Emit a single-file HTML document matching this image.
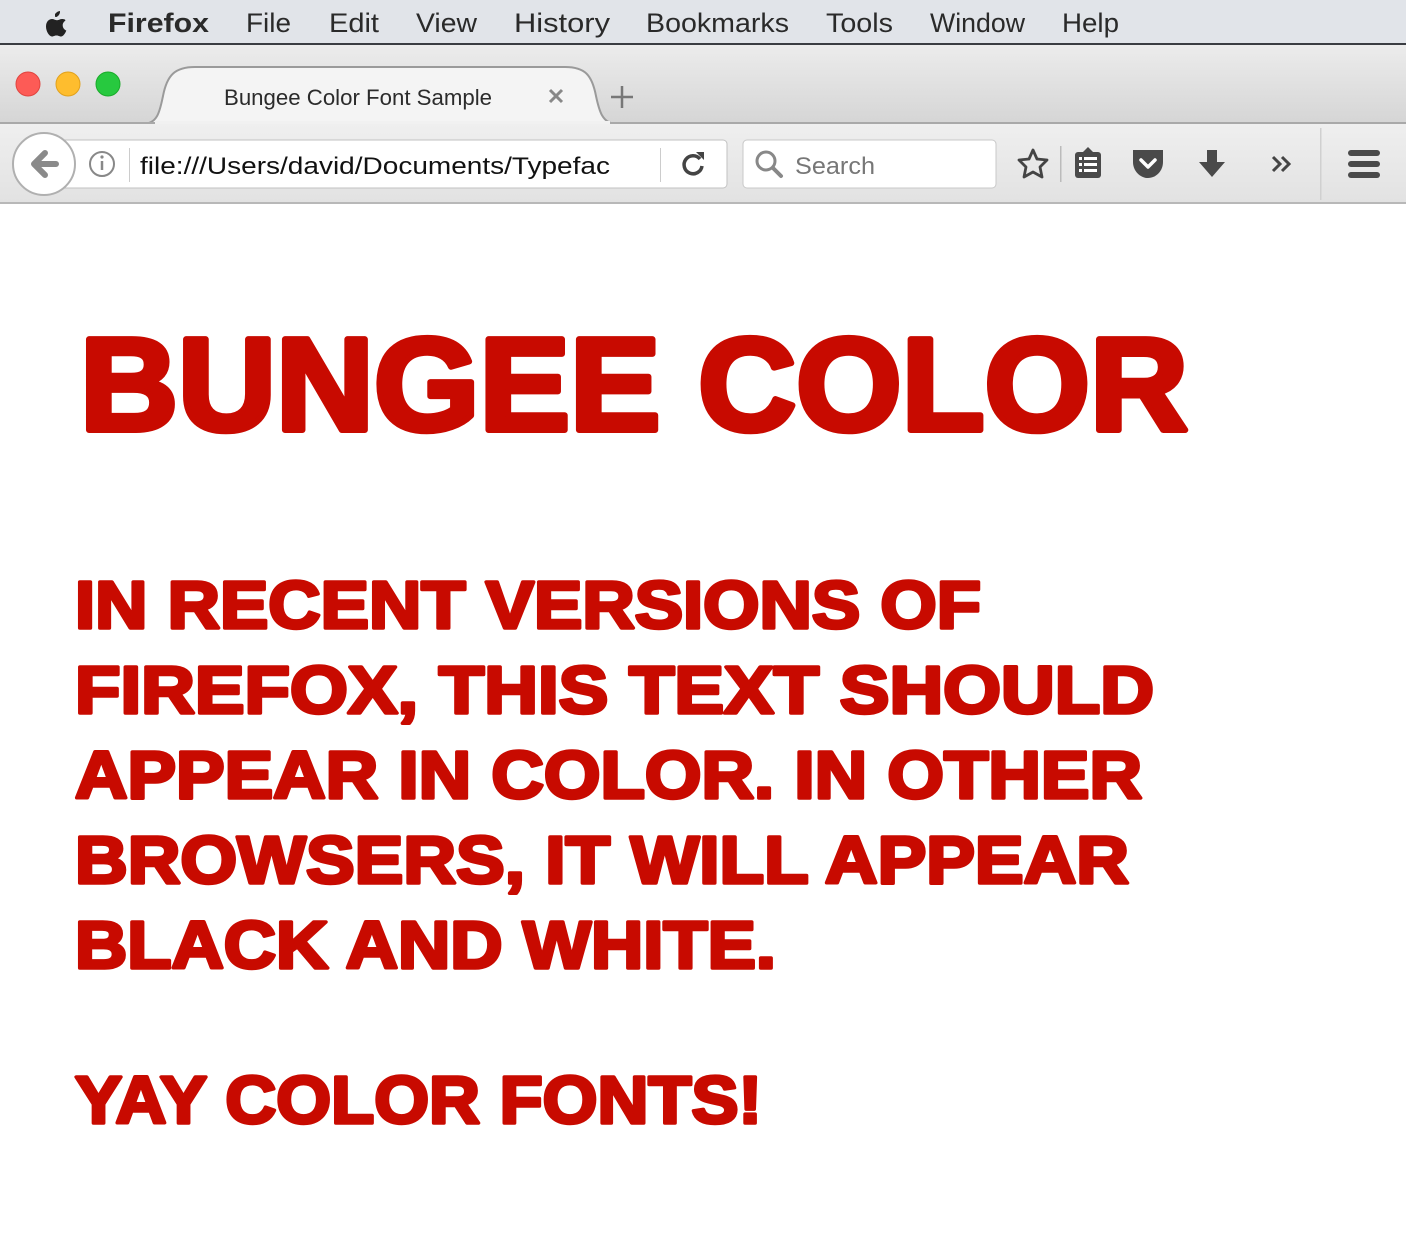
<!DOCTYPE html>
<html><head><meta charset="utf-8"><style>
html,body{margin:0;padding:0;background:#fff;}
svg{display:block}
text{font-family:"Liberation Sans",sans-serif;}
</style></head><body>
<svg width="1406" height="1260" viewBox="0 0 1406 1260" xmlns="http://www.w3.org/2000/svg">
<defs>
<linearGradient id="tb" x1="0" y1="0" x2="0" y2="1"><stop offset="0" stop-color="#ececec"/><stop offset="1" stop-color="#d5d5d5"/></linearGradient>
<linearGradient id="nb" x1="0" y1="0" x2="0" y2="1"><stop offset="0" stop-color="#efefef"/><stop offset="1" stop-color="#e2e2e2"/></linearGradient>
</defs>
<rect x="0" y="0" width="1406" height="44" fill="#e1e4e9"/>
<rect x="0" y="43" width="1406" height="2" fill="#3a3d42"/>
<path d="M55 14c1.5-2 3.5-3 5-3 .2 2-.6 3.8-2 5-1.3 1.1-3 1.6-3 0zM62 19c-2 0-3 1.2-5 1.2s-3-1.2-5-1.2c-3 0-6 2.6-6 7.5 0 5 3.3 10 6 10 1.6 0 2.3-1 4.5-1s2.8 1 4.5 1c2.4 0 4.4-3.6 5.3-6-2.6-1.1-3.6-3.3-3.6-5.3 0-2 1.2-3.6 2.6-4.5C65.7 19.5 64 19 62 19z" fill="#222"/>
<g font-size="27" fill="#2a2a2a">
<text x="108" y="32" font-weight="bold" textLength="101" lengthAdjust="spacingAndGlyphs">Firefox</text>
<text x="246" y="32" textLength="45" lengthAdjust="spacingAndGlyphs">File</text>
<text x="329" y="32" textLength="50" lengthAdjust="spacingAndGlyphs">Edit</text>
<text x="416" y="32" textLength="61" lengthAdjust="spacingAndGlyphs">View</text>
<text x="514" y="32" textLength="96" lengthAdjust="spacingAndGlyphs">History</text>
<text x="646" y="32" textLength="143" lengthAdjust="spacingAndGlyphs">Bookmarks</text>
<text x="826" y="32" textLength="67" lengthAdjust="spacingAndGlyphs">Tools</text>
<text x="930" y="32" textLength="95" lengthAdjust="spacingAndGlyphs">Window</text>
<text x="1062" y="32" textLength="57" lengthAdjust="spacingAndGlyphs">Help</text>
</g>
<rect x="0" y="45" width="1406" height="79" fill="url(#tb)"/>
<circle cx="28" cy="84" r="12" fill="#fd5b56" stroke="#e0443f" stroke-width="1"/>
<circle cx="68" cy="84" r="12" fill="#febd2e" stroke="#e1a11c" stroke-width="1"/>
<circle cx="108" cy="84" r="12" fill="#27c93f" stroke="#1aab2a" stroke-width="1"/>
<path d="M143 124 C158 124 160 110 163 96 C167 75 175 67 195 67 L565 67 C585 67 592 75 596 96 C599 110 602 124 617 124 Z" fill="#f4f4f4" stroke="#9a9a9a" stroke-width="2"/>
<rect x="0" y="122" width="1406" height="2" fill="#a9a9a9"/>
<rect x="155" y="121" width="455" height="4" fill="#f1f1f1"/>
<text x="224" y="105" font-size="22" fill="#2b2b2b" textLength="268" lengthAdjust="spacingAndGlyphs">Bungee Color Font Sample</text>
<path d="M550 90l12 12M562 90l-12 12" stroke="#888" stroke-width="3"/>
<path d="M622 86v22M611 97h22" stroke="#777" stroke-width="2.5"/>
<rect x="0" y="124" width="1406" height="79" fill="url(#nb)"/>
<rect x="0" y="202" width="1406" height="2" fill="#b8b8b8"/>
<rect x="52" y="140" width="675" height="48" rx="4" fill="#fff" stroke="#c2c2c2"/>
<circle cx="44" cy="164" r="31" fill="#fff" stroke="#b0b0b0" stroke-width="2"/>
<path d="M56 164H36M45 153l-11 11 11 11" stroke="#8a8a8a" stroke-width="6" fill="none" stroke-linecap="round" stroke-linejoin="round"/>
<circle cx="102" cy="164" r="12" fill="none" stroke="#888" stroke-width="2"/>
<path d="M102 161v9" stroke="#888" stroke-width="2.5"/><circle cx="102" cy="157" r="1.6" fill="#888"/>
<rect x="129" y="148" width="1" height="34" fill="#ccc"/>
<text x="140" y="174" font-size="24" fill="#111" textLength="470" lengthAdjust="spacingAndGlyphs">file:///Users/david/Documents/Typefac</text>
<rect x="660" y="148" width="1" height="34" fill="#ccc"/>
<path d="M700 159a9 9 0 1 0 2 7" fill="none" stroke="#444" stroke-width="3.5"/>
<path d="M696 152l8 0 0 8z" fill="#444"/>
<rect x="743" y="140" width="253" height="48" rx="4" fill="#fff" stroke="#c8c8c8"/>
<circle cx="766" cy="161" r="9" fill="none" stroke="#888" stroke-width="3"/>
<path d="M773 168l8 8" stroke="#888" stroke-width="4" stroke-linecap="round"/>
<text x="795" y="174" font-size="24" fill="#777" textLength="80" lengthAdjust="spacingAndGlyphs">Search</text>
<path d="M1033 150l4 9 10 1-7 7 2 10-9-5-9 5 2-10-7-7 10-1z" fill="none" stroke="#444" stroke-width="2.8" stroke-linejoin="round"/>
<rect x="1060" y="146" width="1.5" height="36" fill="#bbb"/>
<rect x="1075" y="152" width="26" height="26" rx="3" fill="#4a4a4a"/>
<path d="M1083 152l5-5 5 5z" fill="#4a4a4a"/>
<g fill="#fff"><rect x="1079" y="157" width="3" height="3"/><rect x="1079" y="163" width="3" height="3"/><rect x="1079" y="169" width="3" height="3"/><rect x="1084" y="157" width="13" height="3"/><rect x="1084" y="163" width="13" height="3"/><rect x="1084" y="169" width="13" height="3"/></g>
<path d="M1133 150h30v12c0 9-7 16-15 16s-15-7-15-16z" fill="#4a4a4a"/>
<path d="M1141 160l7 7 7-7" stroke="#fff" stroke-width="3.5" fill="none" stroke-linecap="round" stroke-linejoin="round"/>
<path d="M1207 150h10v12h8l-13 15-13-15h8z" fill="#4a4a4a"/>
<path d="M1273 157l7 7-7 7M1282 157l7 7-7 7" stroke="#444" stroke-width="3" fill="none"/>
<rect x="1320" y="128" width="1.5" height="72" fill="#d0d0d0"/>
<g fill="#4a4a4a"><rect x="1348" y="150" width="32" height="6" rx="3"/><rect x="1348" y="161" width="32" height="6" rx="3"/><rect x="1348" y="172" width="32" height="6" rx="3"/></g>
<g fill="#c80a00" font-weight="bold" stroke="#c80a00" stroke-linejoin="round">
<text x="80" y="430" font-size="132" stroke-width="6" textLength="1108" lengthAdjust="spacingAndGlyphs">BUNGEE COLOR</text>
<g font-size="67" stroke-width="3.5">
<text x="75" y="628" textLength="906" lengthAdjust="spacingAndGlyphs">IN RECENT VERSIONS OF</text>
<text x="75" y="713" textLength="1079" lengthAdjust="spacingAndGlyphs">FIREFOX, THIS TEXT SHOULD</text>
<text x="75" y="798" textLength="1067" lengthAdjust="spacingAndGlyphs">APPEAR IN COLOR. IN OTHER</text>
<text x="75" y="883" textLength="1054" lengthAdjust="spacingAndGlyphs">BROWSERS, IT WILL APPEAR</text>
<text x="75" y="968" textLength="701" lengthAdjust="spacingAndGlyphs">BLACK AND WHITE.</text>
<text x="75" y="1123" textLength="687" lengthAdjust="spacingAndGlyphs">YAY COLOR FONTS!</text>
</g>
</g>
</svg>
</body></html>
